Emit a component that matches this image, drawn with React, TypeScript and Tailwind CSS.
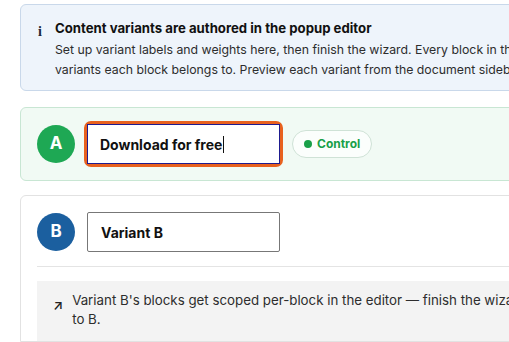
export default function App() {
  return (
    <div
      className="w-[509px] h-[342px] overflow-hidden bg-white"
      style={{ fontFamily: 'Inter, "Noto Sans", sans-serif' }}
    >
      <div className="w-[640px] pl-5 pt-1 flex flex-col">
        {/* info banner */}
        <div className="flex h-[87px] gap-[13px] rounded-md border border-[#c9d8ea] bg-[#eef4fb] pl-[17px] pt-[12px]">
          <span className="w-[12px] pt-[5px] text-[14px] font-bold text-[#1f2937] leading-[20px]" style={{ fontFamily: '"Liberation Serif", serif' }}>
            i
          </span>
          <div className="flex flex-col whitespace-nowrap">
            <p className="text-[13.2px] font-bold text-[#111] leading-[23px]">Content variants are authored in the popup editor</p>
            <p className="text-[12.3px] text-[#2d2d2d] leading-[20px]">
              Set up variant labels and weights here, then finish the wizard. Every block in the popup editor can be scoped to the
              <br />
              variants each block belongs to. Preview each variant from the document sidebar.
            </p>
          </div>
        </div>

        {/* variant A */}
        <div className="mt-[16px] flex items-center gap-3 rounded-md border border-[#c8e6d3] bg-[#f1faf4] px-4 py-[13px]">
          <div className="flex h-[38px] w-[38px] items-center justify-center rounded-full bg-[#1ea854] text-[17px] font-bold text-white">A</div>
          <div className="rounded-[7px] border-[3px] border-[#e8611e] ml-[-3px]">
            <div className="flex h-[40px] w-[193px] items-center border border-[#1e1b8f] bg-white pl-[12px] text-[14px] font-bold text-[#111]">
              Download for free<span className="ml-[1px] h-[17px] w-[1px] bg-[#111]" />
            </div>
          </div>
          <div className="ml-[-3px] flex h-[28px] items-center gap-[5px] rounded-full border border-[#cfe2d6] bg-[#fbfefc] px-[11px] text-[12px] font-bold text-[#18a048]">
            <span className="h-[8px] w-[8px] rounded-full bg-[#18a048]" />
            Control
          </div>
        </div>

        {/* variant B */}
        <div className="mt-[14px] flex flex-col rounded-t-md border border-[#e2e2e2] bg-white px-4 pt-4">
          <div className="flex items-center gap-3">
            <div className="flex h-[38px] w-[38px] items-center justify-center rounded-full bg-[#1b5f9f] text-[17px] font-bold text-white">B</div>
            <div className="flex h-[40px] w-[193px] items-center rounded-[2px] border border-[#777] bg-white pl-[13px] text-[14px] font-bold text-[#111]">
              Variant B
            </div>
          </div>
          <div className="mt-[14px] h-px bg-[#e4e4e4]" />
          <div className="mt-[14px] flex gap-[9px] bg-[#f3f3f3] pl-[16px] pt-[10px] pb-[12px] whitespace-nowrap">
            <span className="pt-[5px] text-[13px] font-semibold text-[#222] leading-[19px]">↗</span>
            <p className="text-[13.3px] text-[#2d2d2d] leading-[19px]">
              Variant B's blocks get scoped per-block in the editor — finish the wizard, then assign blocks
              <br />
              to B.
            </p>
          </div>
        </div>
      </div>
    </div>
  );
}
